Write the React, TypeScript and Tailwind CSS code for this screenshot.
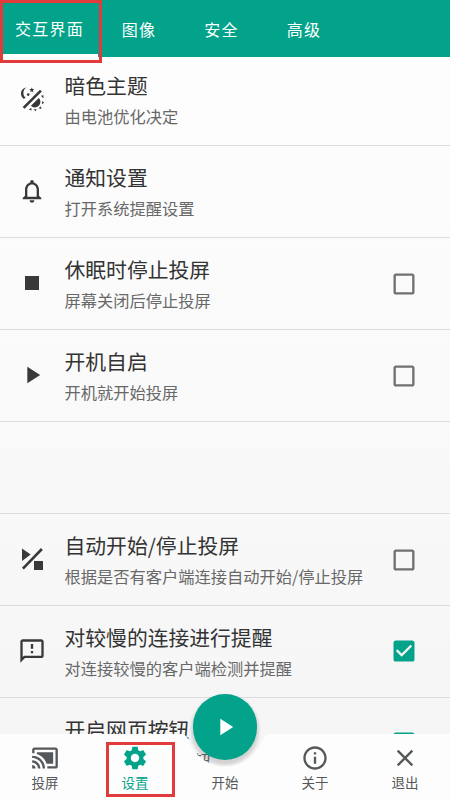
import type { ReactNode } from "react";

const paths = {
  bell: "M12 22c1.1 0 2-.9 2-2h-4c0 1.1.9 2 2 2zm6-6v-5c0-3.07-1.63-5.64-4.5-6.32V4c0-.83-.67-1.5-1.5-1.5s-1.5.67-1.5 1.5v.68C7.64 5.36 6 7.92 6 11v5l-2 2v1h16v-1l-2-2zm-2 1H8v-6c0-2.48 1.51-4.5 4-4.5s4 2.02 4 4.5v6z",
  stop: "M6 6h12v12H6z",
  play: "M8 5v14l11-7z",
  feedback:
    "M20 2H4c-1.1 0-1.99.9-1.99 2L2 22l4-4h14c1.1 0 2-.9 2-2V4c0-1.1-.9-2-2-2zm0 14H5.17l-.59.59-.58.58V4h16v12zm-9-4h2v2h-2zm0-6h2v4h-2z",
  cast: "M1 18v3h3c0-1.66-1.34-3-3-3zm0-4v2c2.76 0 5 2.24 5 5h2c0-3.87-3.13-7-7-7zm18-7H5v1.63c3.96 1.28 7.09 4.41 8.37 8.37H19V7zM1 10v2c4.97 0 9 4.03 9 9h2c0-6.08-4.93-11-11-11zm20-7H3c-1.1 0-2 .9-2 2v3h2V5h18v14h-7v2h7c1.1 0 2-.9 2-2V5c0-1.1-.9-2-2-2z",
  settings:
    "M19.14 12.94c.04-.3.06-.61.06-.94 0-.32-.02-.64-.07-.94l2.03-1.58c.18-.14.23-.41.12-.61l-1.92-3.32c-.12-.22-.37-.29-.59-.22l-2.39.96c-.5-.38-1.03-.7-1.62-.94l-.36-2.54c-.04-.24-.24-.41-.48-.41h-3.84c-.24 0-.43.17-.47.41l-.36 2.54c-.59.24-1.13.57-1.62.94l-2.39-.96c-.22-.08-.47 0-.59.22L2.74 8.87c-.12.21-.08.47.12.61l2.03 1.58c-.05.3-.09.63-.09.94s.02.64.07.94l-2.03 1.58c-.18.14-.23.41-.12.61l1.92 3.32c.12.22.37.29.59.22l2.39-.96c.5.38 1.03.7 1.62.94l.36 2.54c.05.24.24.41.48.41h3.84c.24 0 .44-.17.47-.41l.36-2.54c.59-.24 1.13-.56 1.62-.94l2.39.96c.22.08.47 0 .59-.22l1.92-3.32c.12-.22.07-.47-.12-.61l-2.01-1.58zM12 15.6c-1.98 0-3.6-1.62-3.6-3.6s1.62-3.6 3.6-3.6 3.6 1.62 3.6 3.6-1.62 3.6-3.6 3.6z",
  info: "M11 7h2v2h-2zm0 4h2v6h-2zm1-9C6.48 2 2 6.48 2 12s4.48 10 10 10 10-4.48 10-10S17.52 2 12 2zm0 18c-4.41 0-8-3.59-8-8s3.59-8 8-8 8 3.59 8 8-3.59 8-8 8z",
  close:
    "M19 6.41L17.59 5 12 10.59 6.41 5 5 6.41 10.59 12 5 17.59 6.41 19 12 13.41 17.59 19 19 17.59 13.41 12z",
  unchecked:
    "M19 5v14H5V5h14m0-2H5c-1.1 0-2 .9-2 2v14c0 1.1.9 2 2 2h14c1.1 0 2-.9 2-2V5c0-1.1-.9-2-2-2z",
  checked:
    "M19 3H5c-1.11 0-2 .9-2 2v14c0 1.1.89 2 2 2h14c1.11 0 2-.9 2-2V5c0-1.1-.89-2-2-2zm-9 14l-5-5 1.41-1.41L10 14.17l7.59-7.59L19 8l-9 9z",
};

const Icon = ({ name }: { name: keyof typeof paths }) => (
  <svg viewBox="0 0 24 24" className="size-7 shrink-0 fill-current">
    <path d={paths[name]} />
  </svg>
);

const DayNightIcon = () => (
  <svg viewBox="0 0 28 28" className="size-7 shrink-0 fill-current">
    <path d="M8.4 2.6C5.2 3 3 5.400 3 8.500c0 2.300 1.200 4.300 3 5.500l1.600-1.500C6.200 11.600 5.400 10 5.400 8c0-2.200 1.100-4.200 3-5.400z" />
    <path d="M13.8 2.400l.7 1.700 1.800.1-1.400 1.200.5 1.800-1.600-1-1.600 1 .5-1.800-1.400-1.200 1.800-.1z" />
    <circle cx="10.200" cy="9.600" r="1.300" />
    <path d="M5.600 22.900L22.900 5.600" fill="none" stroke="currentColor" strokeWidth="2.700" />
    <path d="M20.800 12.900a5.500 5.500 0 0 1-7.900 7.900z" />
    <path d="M22.900 10.800l2.700-.6-.3 3zM24.200 16.100l1.900 1.700-2.200 1.500zM22.700 21.300l.9 2.800-2.900-.8zM18.700 23.900l-1.100 2.300-1.900-1.800zM13.300 22.900l.3 2.700-2.900-1z" />
  </svg>
);

const AutoIcon = () => (
  <svg viewBox="0 0 28 28" className="size-7 shrink-0 fill-current">
    <path d="M4 3.500v12.500l8.700-6.500zM16 16h9v9h-9z" />
    <path d="M4.900 23.600L23.900 4" fill="none" stroke="currentColor" strokeWidth="2.600" />
  </svg>
);

type RowProps = {
  icon?: ReactNode;
  title: string;
  text: string;
  checked?: boolean;
};

const Row = ({ icon, title, text, checked }: RowProps) => (
  <li className="flex h-[92px] shrink-0 items-center border-b border-[#dcdcdc] pr-8 pl-[18px]">
    <div className="mb-px w-[46.5px] shrink-0 text-[#37393b]">{icon}</div>
    <div className="flex-1 whitespace-nowrap">
      <h2 className="text-[20.8px] leading-[30px] text-[#333]">{title}</h2>
      <p className="mt-[2px] text-[16.25px] leading-[28px] text-[#686868]">{text}</p>
    </div>
    {checked !== undefined && (
      <span className={checked ? "mb-px text-[#03a28a]" : "text-[#707070]"}>
        <Icon name={checked ? "checked" : "unchecked"} />
      </span>
    )}
  </li>
);

const NavItem = ({ icon, label, active }: { icon?: ReactNode; label: string; active?: boolean }) => (
  <button
    className={`relative flex flex-1 flex-col items-center pt-[9.5px] ${active ? "text-[#03a28a]" : "text-[#55585a]"}`}
  >
    <span className="size-7">{icon}</span>
    <span className="text-[13.5px] leading-[21px]">{label}</span>
  </button>
);

export default function App() {
  return (
    <div className="relative flex h-[800px] w-[450px] flex-col overflow-hidden bg-linear-to-b from-[#fefefe] to-[#f5f5f5] font-['Noto_Sans_CJK_SC',sans-serif]">
      <header className="flex h-[57px] shrink-0 bg-[#03a28a] text-[16px] tracking-[1.3px] text-white">
        <button className="w-[98px] border-b-[3px] border-white pt-px pl-px">交互界面</button>
        <button className="w-[82px]">图像</button>
        <button className="w-[83px]">安全</button>
        <button className="w-[82px]">高级</button>
      </header>

      {/* runs on below the bar so that it shows through the notch */}
      <ul className="-mt-[3px] -mb-[34px] flex min-h-0 flex-1 flex-col overflow-hidden">
        <Row icon={<DayNightIcon />} title="暗色主题" text="由电池优化决定" />
        <Row icon={<Icon name="bell" />} title="通知设置" text="打开系统提醒设置" />
        <Row icon={<Icon name="stop" />} title="休眠时停止投屏" text="屏幕关闭后停止投屏" checked={false} />
        <Row icon={<Icon name="play" />} title="开机自启" text="开机就开始投屏" checked={false} />
        <li className="h-[92px] shrink-0 border-b border-[#dcdcdc]" />
        <Row
          icon={<AutoIcon />}
          title="自动开始/停止投屏"
          text="根据是否有客户端连接自动开始/停止投屏"
          checked={false}
        />
        <Row icon={<Icon name="feedback" />} title="对较慢的连接进行提醒" text="对连接较慢的客户端检测并提醒" checked />
        <Row title="开启网页按钮" text="允许网页端使用按钮" checked />
      </ul>

      <nav className="relative flex h-[66px] shrink-0">
        <svg viewBox="0 0 450 66" className="absolute inset-0 h-[66px] w-[450px]">
          <path
            d="M0 0H180C184 0 186 1 188 5C194 22 207 32 225 32C243 32 256 22 262 7C264 2 267 0 271 0H450V66H0Z"
            className="fill-[#fdfdfd]"
          />
        </svg>
        <NavItem icon={<Icon name="cast" />} label="投屏" />
        <NavItem icon={<Icon name="settings" />} label="设置" active />
        <NavItem label="开始" />
        <NavItem icon={<Icon name="info" />} label="关于" />
        <NavItem icon={<Icon name="close" />} label="退出" />
        <button className="absolute -top-10 left-[193px] flex h-[66px] w-16 items-center justify-center rounded-full bg-[#03a28a] text-white shadow-[0_3px_3px_2px_rgba(0,0,0,0.14)]">
          <Icon name="play" />
        </button>
      </nav>

      <div className="absolute top-0 left-0 h-[63px] w-[102px] border-[3px] border-[#e23b3b]" />
      <div className="absolute top-[742px] left-[106px] h-[55px] w-[69px] border-[3px] border-[#e23b3b]" />
    </div>
  );
}
